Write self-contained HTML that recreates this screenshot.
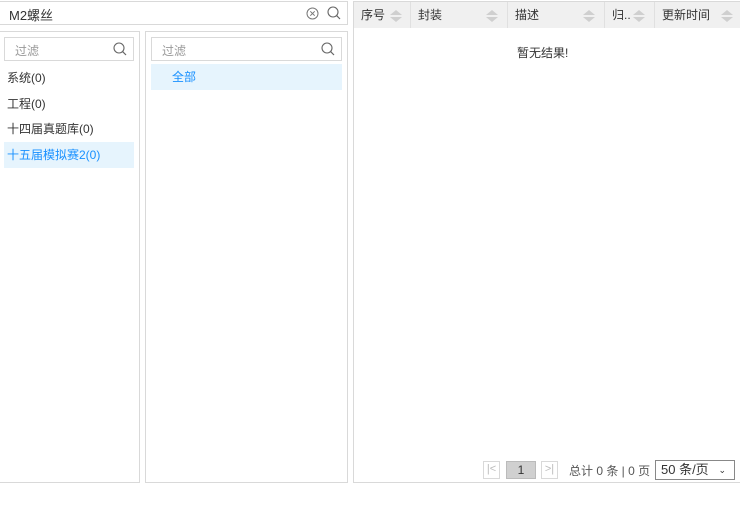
<!DOCTYPE html><html><head><meta charset="utf-8"><style>
*{box-sizing:border-box;margin:0;padding:0}
body{width:740px;height:526px;background:#fff;font-family:"Liberation Sans","Noto Sans CJK SC",sans-serif;font-size:12px;color:#333;position:relative;overflow:hidden}
.abs{position:absolute}
.box{position:absolute;border:1px solid #d9d9d9}
.item{position:absolute;left:4px;width:130px;height:26px;line-height:26px;padding-left:3px;font-size:12px}
.sel{background:#e6f4fd;color:#1890ff}
.th{position:absolute;top:2px;height:26px;line-height:26px;border-right:1px solid #e0e0e0;padding-left:7px;font-size:12px}
.sort{position:absolute;top:8px;width:12px;height:12px}
.sort:before{content:"";position:absolute;left:0;top:0;border-left:6px solid transparent;border-right:6px solid transparent;border-bottom:5px solid #cfcfcf}
.sort:after{content:"";position:absolute;left:0;top:7px;border-left:6px solid transparent;border-right:6px solid transparent;border-top:5px solid #cfcfcf}
</style></head><body>
<div class="box" style="left:-1px;top:1px;width:349px;height:24px"></div>
<div class="abs" style="left:9px;top:5px;font-size:13px">M2螺丝</div>
<svg class="abs" style="left:306px;top:7px" width="13" height="13"><circle cx="6.5" cy="6.5" r="5.5" fill="none" stroke="#777"/><path d="M4.3 4.3l4.4 4.4M8.7 4.3l-4.4 4.4" stroke="#777"/></svg>
<svg class="abs" style="left:327px;top:6px" width="14" height="14"><circle cx="6" cy="6" r="5" fill="none" stroke="#666" stroke-width="1.1"/><path d="M9.6 9.6l3.4 3.4" stroke="#666" stroke-width="1.2"/></svg>

<div class="box" style="left:-1px;top:31px;width:141px;height:452px"></div>
<div class="box" style="left:4px;top:37px;width:130px;height:24px"></div>
<div class="abs" style="left:15px;top:42px;color:#999">过滤</div>
<svg class="abs" style="left:113px;top:42px" width="14" height="14"><circle cx="6" cy="6" r="5" fill="none" stroke="#666" stroke-width="1.1"/><path d="M9.6 9.6l3.4 3.4" stroke="#666" stroke-width="1.2"/></svg>
<div class="item" style="top:65px">系统(0)</div>
<div class="item" style="top:91px">工程(0)</div>
<div class="item" style="top:116px">十四届真题库(0)</div>
<div class="item sel" style="top:142px">十五届模拟赛2(0)</div>

<div class="box" style="left:145px;top:31px;width:203px;height:452px"></div>
<div class="box" style="left:151px;top:37px;width:191px;height:24px"></div>
<div class="abs" style="left:162px;top:42px;color:#999">过滤</div>
<svg class="abs" style="left:321px;top:42px" width="14" height="14"><circle cx="6" cy="6" r="5" fill="none" stroke="#666" stroke-width="1.1"/><path d="M9.6 9.6l3.4 3.4" stroke="#666" stroke-width="1.2"/></svg>
<div class="abs sel" style="left:151px;top:64px;width:191px;height:26px;line-height:26px;padding-left:21px">全部</div>

<div class="box" style="left:353px;top:1px;width:390px;height:482px"></div>
<div class="abs" style="left:354px;top:2px;width:386px;height:26px;background:#f0f0f0"></div>
<div class="th" style="left:354px;width:57px">序号<span class="sort" style="left:36px"></span></div>
<div class="th" style="left:411px;width:97px">封装<span class="sort" style="left:75px"></span></div>
<div class="th" style="left:508px;width:97px">描述<span class="sort" style="left:75px"></span></div>
<div class="th" style="left:605px;width:50px">归..<span class="sort" style="left:28px"></span></div>
<div class="th" style="left:655px;width:85px;border-right:0">更新时间<span class="sort" style="left:66px"></span></div>
<div class="abs" style="left:517px;top:44px">暂无结果!</div>

<div class="box" style="left:483px;top:461px;width:17px;height:18px;color:#bbb;text-align:center;line-height:15px;font-size:11px">|&lt;</div>
<div class="abs" style="left:506px;top:461px;width:30px;height:18px;background:#d0d0d0;border:1px solid #bbb;text-align:center;line-height:16px">1</div>
<div class="box" style="left:541px;top:461px;width:17px;height:18px;color:#bbb;text-align:center;line-height:15px;font-size:11px">&gt;|</div>
<div class="abs" style="left:569px;top:462px;color:#555">总计 0 条 | 0 页</div>
<div class="abs" style="left:655px;top:460px;width:80px;height:20px;border:1px solid #888;padding-left:5px;line-height:18px;font-size:13px">50 条/页<span style="position:absolute;right:8px;top:0;font-size:9px">⌄</span></div>
</body></html>
